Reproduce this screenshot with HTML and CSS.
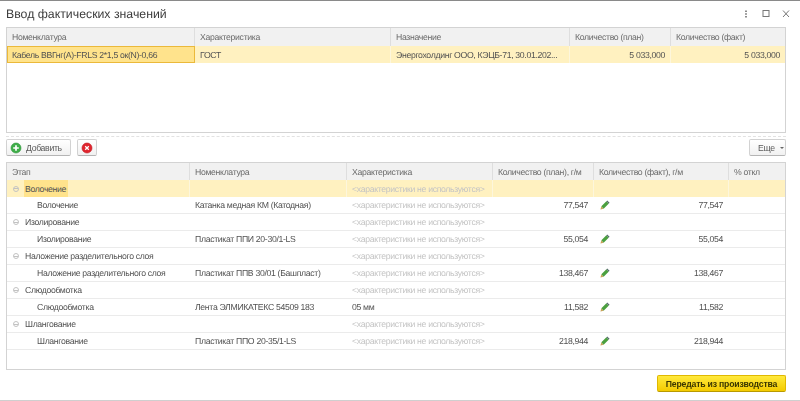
FILE: index.html
```html
<!DOCTYPE html>
<html lang="ru">
<head>
<meta charset="utf-8">
<title>Ввод фактических значений</title>
<link rel="stylesheet" href="styles.css">
</head>
<body>
<div class="window">
  <header class="titlebar">
    <h1 class="title">Ввод фактических значений</h1>
    <div class="winctl">
      <svg class="ctl" width="8" height="10" viewBox="0 0 8 10"><path d="M4 1.500v1.500M4 4.300v1.500M4 7v1.500" stroke="#666" stroke-width="1.500" fill="none"/></svg>
      <svg class="ctl" width="8" height="10" viewBox="0 0 8 10"><rect x="1" y="1.500" width="6" height="6" stroke="#777" fill="none"/></svg>
      <svg class="ctl" width="8" height="10" viewBox="0 0 8 10"><path d="M1 1.500l6 6.500M7 1.500l-6 6.500" stroke="#777" fill="none"/></svg>
    </div>
  </header>

  <section class="grid top-grid">
    <div class="row head cols-top">
      <div class="cell">Номенклатура</div><div class="cell">Характеристика</div><div class="cell">Назначение</div><div class="cell">Количество (план)</div><div class="cell">Количество (факт)</div>
    </div>
    <div class="row selected cols-top">
      <div class="cell focus">Кабель ВВГнг(А)-FRLS 2*1,5 ок(N)-0,66</div><div class="cell">ГОСТ</div><div class="cell">Энергохолдинг ООО, КЭЦБ-71, 30.01.202...</div><div class="cell num">5 033,000</div><div class="cell num">5 033,000</div>
    </div>
  </section>

  <div class="toolbar">
    <button class="btn add"><svg width="12" height="12" viewBox="0 0 12 12"><circle cx="6" cy="6" r="5" fill="#3fae49" stroke="#2c9437" stroke-width=".6"/><path d="M6 3.200v5.600M3.200 6h5.600" stroke="#fff" stroke-width="1.700"/></svg>Добавить</button>
    <button class="btn del"><svg width="12" height="12" viewBox="0 0 12 12"><circle cx="6" cy="6" r="5" fill="#e0252e" stroke="#c01a22" stroke-width=".6"/><path d="M4.200 4.200l3.600 3.600M7.800 4.200l-3.600 3.600" stroke="#fff" stroke-width="1.300"/></svg></button>
    <button class="btn more">Еще<span class="caret"></span></button>
  </div>

  <section class="grid bottom-grid">
    <div class="row head cols-bot">
      <div class="cell">Этап</div><div class="cell">Номенклатура</div><div class="cell">Характеристика</div><div class="cell">Количество (план), г/м</div><div class="cell">Количество (факт), г/м</div><div class="cell">% откл</div>
    </div>

    <div class="row selected cols-bot">
      <div class="cell group"><span class="toggle"></span><span class="mark">Волочение</span></div><div class="cell"></div><div class="cell muted">&lt;характеристики не используются&gt;</div><div class="cell"></div><div class="cell"></div><div class="cell"></div>
    </div>
    <div class="row cols-bot">
      <div class="cell child">Волочение</div><div class="cell">Катанка медная КМ (Катодная)</div><div class="cell muted">&lt;характеристики не используются&gt;</div><div class="cell num">77,547</div>
      <div class="cell fact"><svg class="pencil" width="10" height="10" viewBox="0 0 11 11"><path d="M0.500 10.500l1-3.500 2.500 2.500z" fill="#c9a25a"/><path d="M1.500 7l5.500-5.500 2.500 2.500-5.500 5.500z" fill="#4ba03f"/><path d="M7 1.500l1-1 2.500 2.500-1 1z" fill="#556b6b"/></svg><span>77,547</span></div><div class="cell"></div>
    </div>

    <div class="row cols-bot">
      <div class="cell group"><span class="toggle"></span><span class="mark-none">Изолирование</span></div><div class="cell"></div><div class="cell muted">&lt;характеристики не используются&gt;</div><div class="cell"></div><div class="cell"></div><div class="cell"></div>
    </div>
    <div class="row cols-bot">
      <div class="cell child">Изолирование</div><div class="cell">Пластикат ППИ 20-30/1-LS</div><div class="cell muted">&lt;характеристики не используются&gt;</div><div class="cell num">55,054</div>
      <div class="cell fact"><svg class="pencil" width="10" height="10" viewBox="0 0 11 11"><path d="M0.500 10.500l1-3.500 2.500 2.500z" fill="#c9a25a"/><path d="M1.500 7l5.500-5.500 2.500 2.500-5.500 5.500z" fill="#4ba03f"/><path d="M7 1.500l1-1 2.500 2.500-1 1z" fill="#556b6b"/></svg><span>55,054</span></div><div class="cell"></div>
    </div>

    <div class="row cols-bot">
      <div class="cell group"><span class="toggle"></span><span class="mark-none">Наложение разделительного слоя</span></div><div class="cell"></div><div class="cell muted">&lt;характеристики не используются&gt;</div><div class="cell"></div><div class="cell"></div><div class="cell"></div>
    </div>
    <div class="row cols-bot">
      <div class="cell child">Наложение разделительного слоя</div><div class="cell">Пластикат ППВ 30/01 (Башпласт)</div><div class="cell muted">&lt;характеристики не используются&gt;</div><div class="cell num">138,467</div>
      <div class="cell fact"><svg class="pencil" width="10" height="10" viewBox="0 0 11 11"><path d="M0.500 10.500l1-3.500 2.500 2.500z" fill="#c9a25a"/><path d="M1.500 7l5.500-5.500 2.500 2.500-5.500 5.500z" fill="#4ba03f"/><path d="M7 1.500l1-1 2.500 2.500-1 1z" fill="#556b6b"/></svg><span>138,467</span></div><div class="cell"></div>
    </div>

    <div class="row cols-bot">
      <div class="cell group"><span class="toggle"></span><span class="mark-none">Слюдообмотка</span></div><div class="cell"></div><div class="cell muted">&lt;характеристики не используются&gt;</div><div class="cell"></div><div class="cell"></div><div class="cell"></div>
    </div>
    <div class="row cols-bot">
      <div class="cell child">Слюдообмотка</div><div class="cell">Лента ЭЛМИКАТЕКС 54509 183</div><div class="cell">05 мм</div><div class="cell num">11,582</div>
      <div class="cell fact"><svg class="pencil" width="10" height="10" viewBox="0 0 11 11"><path d="M0.500 10.500l1-3.500 2.500 2.500z" fill="#c9a25a"/><path d="M1.500 7l5.500-5.500 2.500 2.500-5.500 5.500z" fill="#4ba03f"/><path d="M7 1.500l1-1 2.500 2.500-1 1z" fill="#556b6b"/></svg><span>11,582</span></div><div class="cell"></div>
    </div>

    <div class="row cols-bot">
      <div class="cell group"><span class="toggle"></span><span class="mark-none">Шлангование</span></div><div class="cell"></div><div class="cell muted">&lt;характеристики не используются&gt;</div><div class="cell"></div><div class="cell"></div><div class="cell"></div>
    </div>
    <div class="row cols-bot">
      <div class="cell child">Шлангование</div><div class="cell">Пластикат ППО 20-35/1-LS</div><div class="cell muted">&lt;характеристики не используются&gt;</div><div class="cell num">218,944</div>
      <div class="cell fact"><svg class="pencil" width="10" height="10" viewBox="0 0 11 11"><path d="M0.500 10.500l1-3.500 2.500 2.500z" fill="#c9a25a"/><path d="M1.500 7l5.500-5.500 2.500 2.500-5.500 5.500z" fill="#4ba03f"/><path d="M7 1.500l1-1 2.500 2.500-1 1z" fill="#556b6b"/></svg><span>218,944</span></div><div class="cell"></div>
    </div>
  </section>

  <footer class="footer">
    <button class="primary">Передать из производства</button>
  </footer>
</div>
</body>
</html>
```

FILE: styles.css
```css
* { box-sizing: border-box; }
html, body { margin: 0; padding: 0; background: #fff; }
body {
  width: 800px;
  height: 401px;
  overflow: hidden;
  font-family: "Liberation Sans", Arial, sans-serif;
  font-size: 8.7px;
  letter-spacing: -.33px;
  text-rendering: geometricPrecision;
  color: #525252;
}
.window {
  width: 800px;
  height: 401px;
  border-top: 1px solid #8a8a8a;
  border-bottom: 1px solid #cfcfcf;
  padding: 0 14px 0 6px;
  display: flex;
  flex-direction: column;
  filter: blur(.35px);
}
.titlebar {
  height: 26px;
  display: flex;
  align-items: center;
  justify-content: space-between;
}
.title { margin: 0; font-size: 12.3px; font-weight: 400; letter-spacing: 0; color: #3c3c3c; }
.winctl { display: flex; gap: 12px; margin-right: -4px; }
.grid { border: 1px solid #d3d3d3; background: #fff; }
.top-grid { height: 106px; flex: none; }
.bottom-grid { height: 208px; margin-top: 5px; flex: none; }
.row { display: grid; height: 17px; border-bottom: 1px solid #ebebeb; }
.cols-top { grid-template-columns: 188px 196px 179px 101px 1fr; }
.cols-bot { grid-template-columns: 183px 157px 146px 101px 135px 1fr; }
.cell {
  padding: 0 5px;
  display: flex;
  align-items: center;
  white-space: nowrap;
  overflow: hidden;
  min-width: 0;
}
.head { height: 18px; background: #f1f1f1; border-bottom: 0; color: #6b6b6b; }
.bottom-grid .head { height: 17px; }
.head .cell { border-right: 1px solid #dedede; }
.head .cell:last-child { border-right: 0; }
.selected { background: #fff1c0; border-bottom: 0; }
.selected .cell { border-right: 1px solid #fdf6dc; }
.selected .cell:last-child { border-right: 0; }
.selected .focus { background: #ffe38c; border: 1px solid #ebb93a; padding-left: 4px; }
.num { justify-content: flex-end; }
.bottom-grid .num { padding-right: 6px; }
.muted { color: #c4c4c4; }
.group { padding-left: 6px; padding-right: 0; }
.toggle {
  width: 6px;
  height: 6px;
  border: 1px solid #c2c2c2;
  border-radius: 50%;
  margin-right: 5px;
  flex: none;
  background: linear-gradient(#c2c2c2, #c2c2c2) center / 4px 1px no-repeat;
}
.mark { background: #ffe38c; align-self: stretch; display: flex; align-items: center; padding: 0 2px 0 1px; }
.mark-none { padding-left: 1px; }
.child { padding-left: 30px; }
.fact { justify-content: space-between; padding: 0 6px 0 6px; }
.pencil { flex: none; }
.toolbar { display: flex; gap: 6px; margin-top: 3px; padding-top: 2px; border-top: 1px dashed #e2e2e2; height: 21px; flex: none; }
.btn {
  height: 17px;
  padding: 0;
  display: flex;
  align-items: center;
  font: inherit;
  letter-spacing: inherit;
  color: #5a5a5a;
  background: linear-gradient(#fff, #f1f1f1);
  border: 1px solid #d2d2d2;
  border-bottom-color: #b5b5b5;
  border-radius: 2px;
}
.add { width: 65px; padding-left: 3px; gap: 4px; }
.del { width: 20px; justify-content: center; }
.more { margin-left: auto; width: 37px; padding-left: 8px; }
.caret { margin-left: 5px; border: 2px solid transparent; border-top: 2px solid #666; border-bottom: 0; }
.footer { display: flex; justify-content: flex-end; margin-top: 5px; flex: none; }
.primary {
  width: 129px;
  height: 17px;
  padding: 0;
  font: inherit;
  font-weight: 700;
  letter-spacing: -.2px;
  color: #3a3600;
  background: linear-gradient(#ffe93c, #f4cb00);
  border: 1px solid #e0b800;
  border-bottom-color: #b99a00;
  border-radius: 2px;
}
```
